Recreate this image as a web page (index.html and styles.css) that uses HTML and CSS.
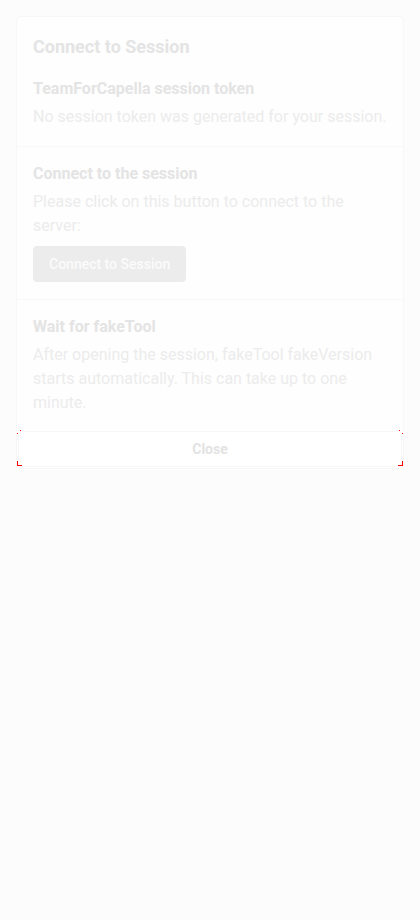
FILE: index.html
```html
<!DOCTYPE html>
<html>
<head>
<meta charset="utf-8">
<link rel="stylesheet" href="styles.css">
</head>
<body>
<div class="dialog">
  <section class="section">
    <h2 class="title">Connect to Session</h2>
    <h3 class="heading">TeamForCapella session token</h3>
    <p class="text">No session token was generated for your session.</p>
  </section>
  <section class="section">
    <h3 class="heading">Connect to the session</h3>
    <p class="text">Please click on this button to connect to the server:</p>
    <button class="connect">Connect to Session</button>
  </section>
  <section class="section last">
    <h3 class="heading">Wait for fakeTool</h3>
    <p class="text">After opening the session, fakeTool fakeVersion starts automatically. This can take up to one minute.</p>
  </section>
  <div class="actions">
    <button class="close">Close</button>
    <svg class="focus-marks" width="387" height="37" viewBox="0 0 387 37" shape-rendering="crispEdges">
      <rect x="3" y="0" width="1" height="1" fill="#ff0000"/>
      <rect x="0" y="3" width="1" height="1" fill="#ff0000"/>
      <rect x="382" y="0" width="1" height="1" fill="#ff0000"/>
      <rect x="385" y="3" width="1" height="1" fill="#ff0000"/>
      <rect x="0" y="31" width="1" height="5" fill="#ff0000"/>
      <rect x="0" y="35" width="5" height="1" fill="#ff0000"/>
      <rect x="385" y="31" width="1" height="5" fill="#ff0000"/>
      <rect x="381" y="35" width="5" height="1" fill="#ff0000"/>
    </svg>
  </div>
</div>
</body>
</html>
```
FILE: styles.css
```css
html, body {
  margin: 0;
  padding: 0;
  background: #fcfcfc;
  font-family: Roboto, "Noto Sans", sans-serif;
}
body {
  padding: 16px;
  height: 920px;
  box-sizing: border-box;
}
.dialog {
  background: #fefefe;
  border: 1px solid #f7f7f7;
  border-radius: 4px;
  display: flex;
  flex-direction: column;
}
.section {
  padding: 15px 16px 17px;
  border-bottom: 1px solid #f8f8f8;
}
.section.last {
  border-bottom: none;
  padding-bottom: 16px;
}
.title {
  margin: 0 0 15px;
  font-size: 18px;
  line-height: 30px;
  font-weight: 700;
  color: #e4e4e4;
}
.heading {
  margin: 0 0 4px;
  font-size: 16px;
  line-height: 24px;
  font-weight: 700;
  color: #e4e4e4;
}
.text {
  margin: 0;
  font-size: 16px;
  line-height: 24px;
  color: #ececec;
}
.connect {
  margin-top: 8px;
  height: 36px;
  padding: 0 16px;
  border: none;
  border-radius: 4px;
  background: #ececec;
  color: #fbfbfb;
  font-family: Roboto, sans-serif;
  font-size: 14px;
  font-weight: 500;
}
.actions {
  position: relative;
  padding-bottom: 1px;
}
.close {
  display: block;
  width: calc(100% - 2px);
  margin: 0 auto;
  height: 36px;
  border: 1px solid #f7f7f7;
  border-radius: 4px;
  background: #ffffff;
  color: #e3e3e3;
  font-family: Roboto, sans-serif;
  font-size: 14px;
  font-weight: 700;
}
.focus-marks {
  position: absolute;
  left: 0;
  top: -1px;
}
```
